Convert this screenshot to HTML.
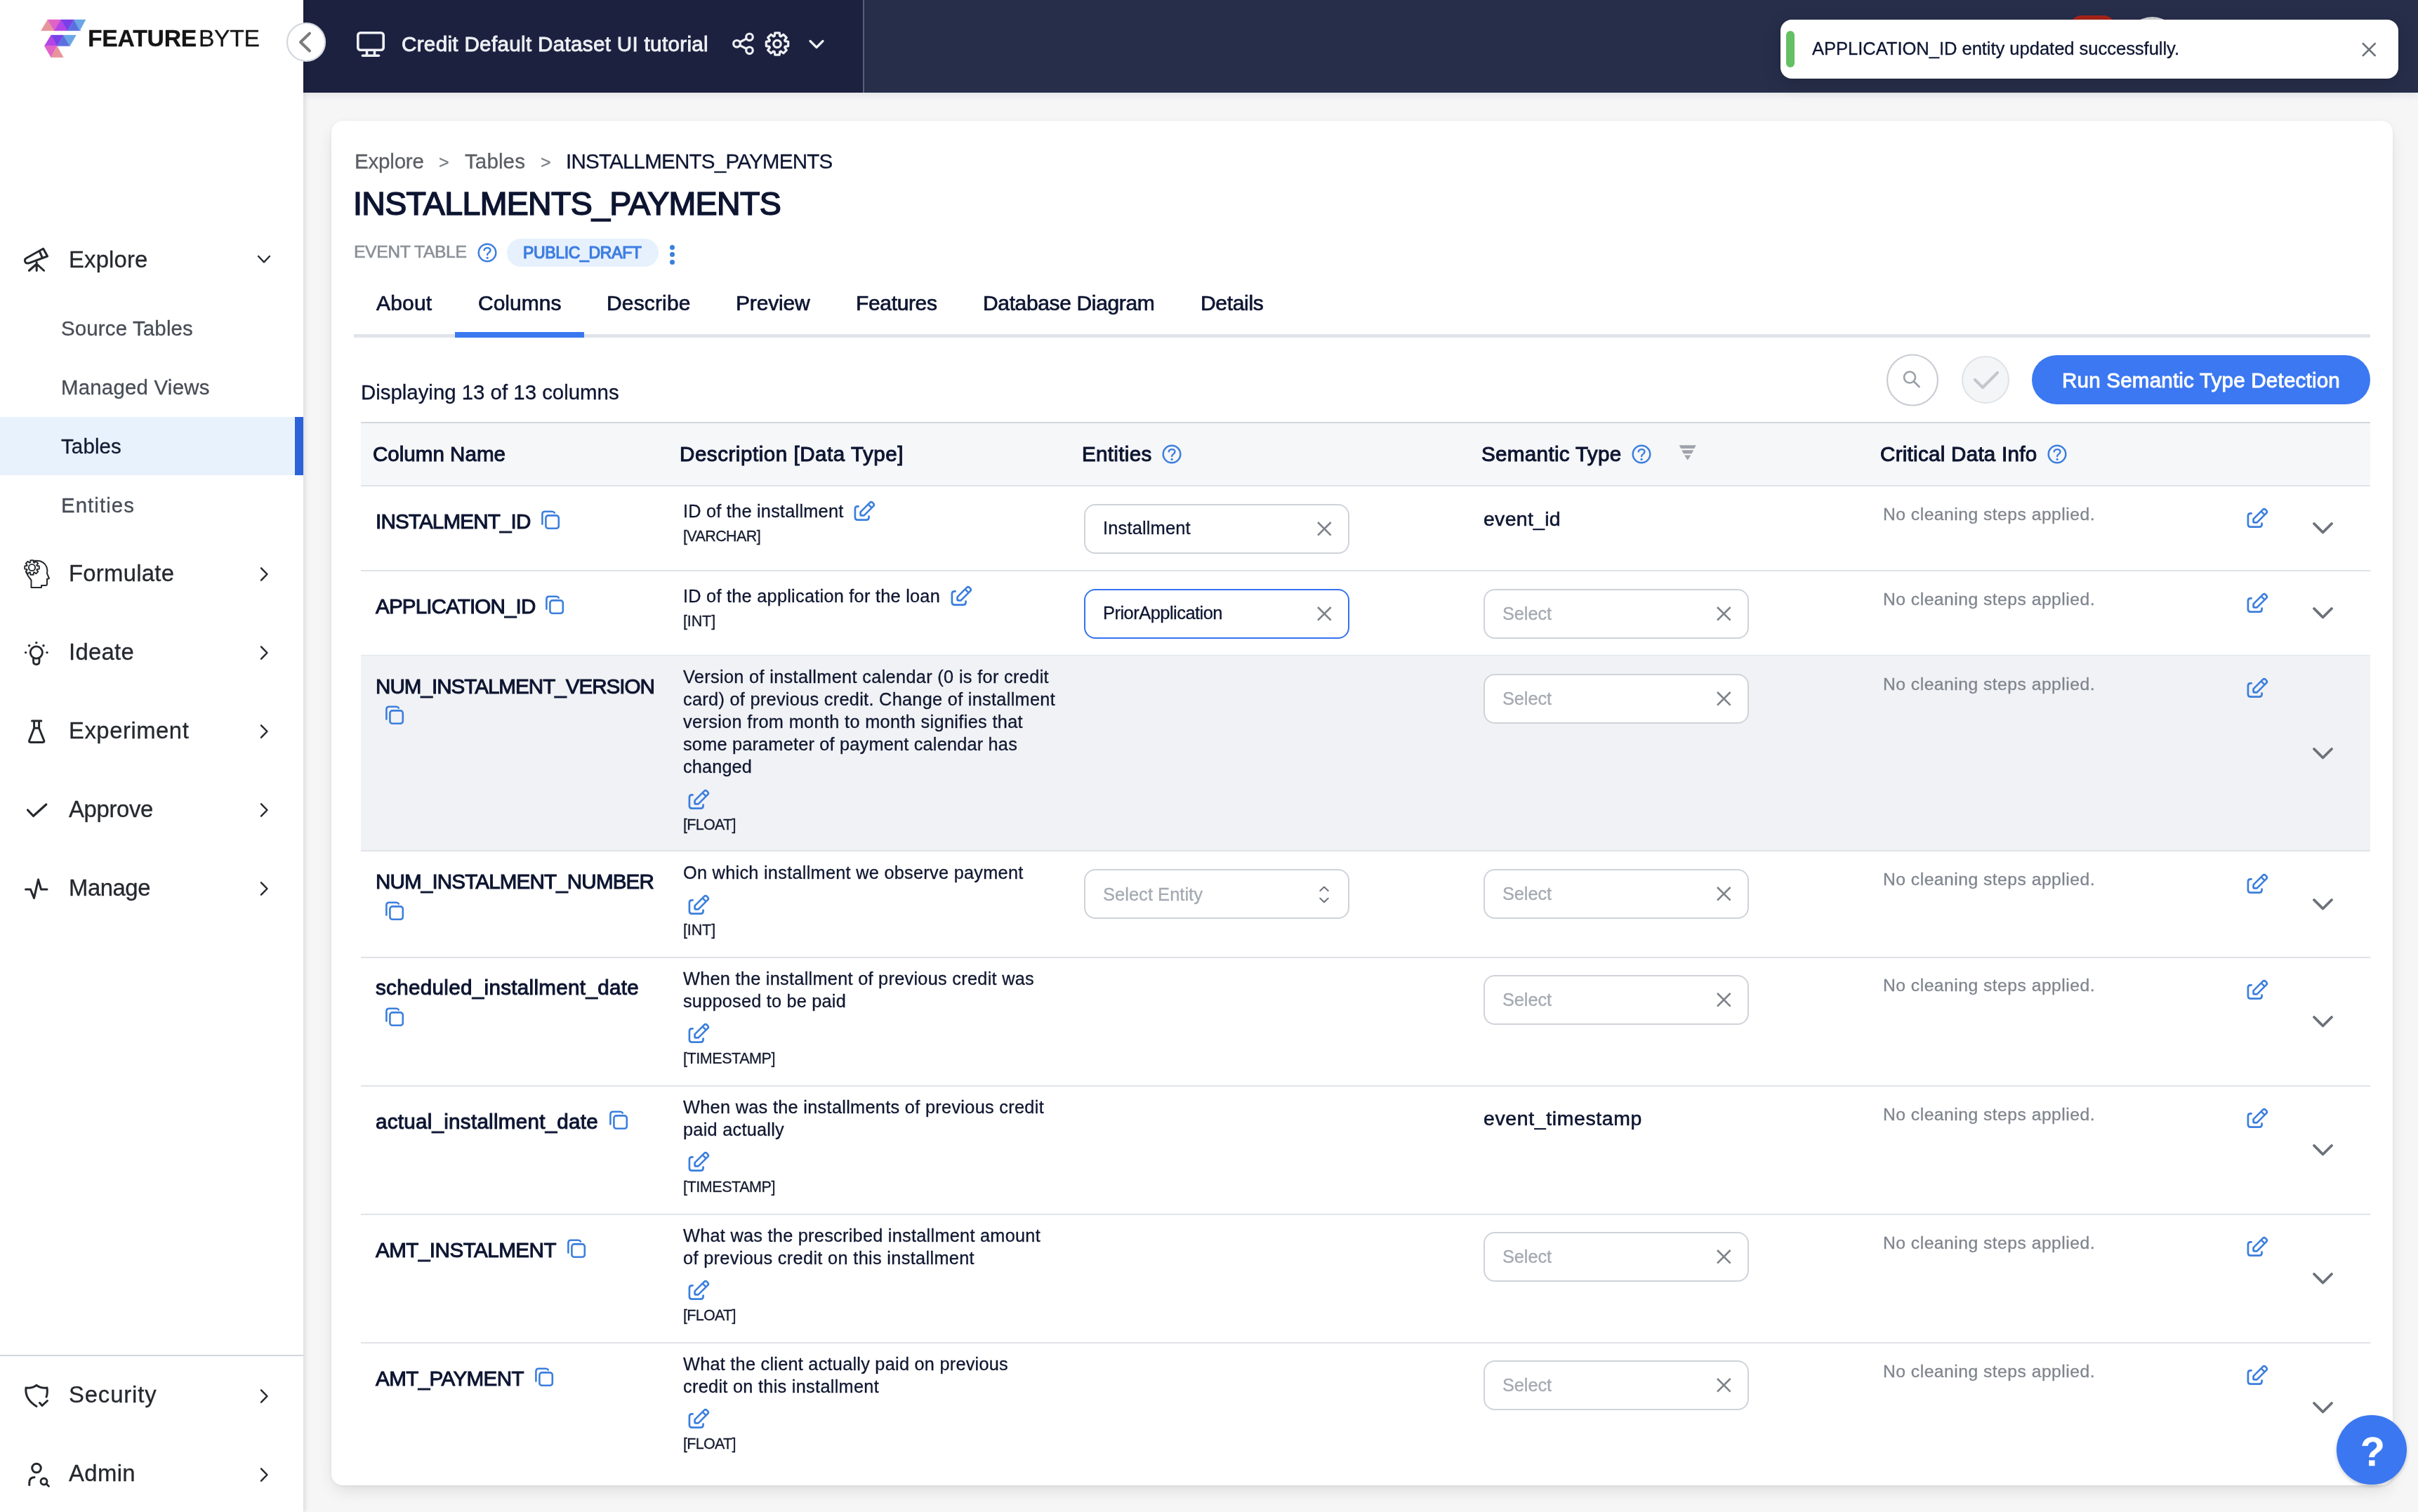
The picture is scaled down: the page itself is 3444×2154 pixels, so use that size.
<!DOCTYPE html><html><head><meta charset="utf-8"><style>
html,body{margin:0;padding:0;}
body{width:3444px;height:2154px;overflow:hidden;position:relative;background:#f6f6f7;font-family:"Liberation Sans", sans-serif;}
.t{position:absolute;white-space:nowrap;will-change:transform;-webkit-text-stroke:0.3px currentColor;}
.b{position:absolute;box-sizing:border-box;}
svg.b{overflow:visible;}

</style></head><body>
<div class="b" style="left:472px;top:172px;width:2936px;height:1944px;background:#fff;border-radius:16px;box-shadow:0 1px 5px rgba(0,0,0,0.06),0 10px 24px -4px rgba(0,0,0,0.11);"></div>
<div class="t" style="left:504.5px;top:214.9px;font-size:29.6px;line-height:29.6px;font-weight:400;color:#5b5e63;letter-spacing:-0.235px;">Explore</div>
<div class="t" style="left:625.0px;top:218.8px;font-size:25px;line-height:25px;font-weight:400;color:#7a7e84;">&gt;</div>
<div class="t" style="left:661.7px;top:214.9px;font-size:29.6px;line-height:29.6px;font-weight:400;color:#5b5e63;letter-spacing:0.076px;">Tables</div>
<div class="t" style="left:769.5px;top:218.8px;font-size:25px;line-height:25px;font-weight:400;color:#7a7e84;">&gt;</div>
<div class="t" style="left:805.6px;top:214.9px;font-size:29.6px;line-height:29.6px;font-weight:400;color:#0d1531;letter-spacing:-0.805px;">INSTALLMENTS_PAYMENTS</div>
<div class="t" style="left:503.0px;top:267.1px;font-size:46.5px;line-height:46.5px;font-weight:400;color:#0d1531;-webkit-text-stroke:1.6px #0d1531;letter-spacing:-0.653px;">INSTALLMENTS_PAYMENTS</div>
<div class="t" style="left:504.0px;top:346.8px;font-size:24.7px;line-height:24.7px;font-weight:400;color:#8a8f97;-webkit-text-stroke:0.6px #8a8f97;letter-spacing:-0.378px;">EVENT TABLE</div>
<svg class="b" style="left:678px;top:344px;" width="32" height="32" viewBox="678 344 32 32" fill="none" ><circle cx="694" cy="360" r="12.3" stroke="#3c7fdd" stroke-width="2.5"/><path d="M689.7,356.4 C689.7,352 698.5,352 698.5,356.6 C698.5,359.8 694.1,360 694.1,363" stroke="#3c7fdd" stroke-width="2.375" stroke-linecap="round"/><circle cx="694.1" cy="367.3" r="1.6" fill="#3c7fdd"/></svg>
<div class="b" style="left:722px;top:340px;width:216px;height:40px;background:#e6f1fd;border-radius:20px;"></div>
<div class="t" style="left:745.4px;top:348.8px;font-size:23px;line-height:23px;font-weight:400;color:#3d7de2;-webkit-text-stroke:1.2px #3d7de2;letter-spacing:-0.329px;">PUBLIC_DRAFT</div>
<div class="b" style="left:953.5px;top:348.5px;width:7px;height:7px;background:#3c7fdd;border-radius:50%;"></div>
<div class="b" style="left:953.5px;top:359.0px;width:7px;height:7px;background:#3c7fdd;border-radius:50%;"></div>
<div class="b" style="left:953.5px;top:369.5px;width:7px;height:7px;background:#3c7fdd;border-radius:50%;"></div>
<div class="t" style="left:536.4px;top:417.1px;font-size:30px;line-height:30px;font-weight:400;color:#0d1531;-webkit-text-stroke:0.7px #0d1531;letter-spacing:0.179px;">About</div>
<div class="t" style="left:681.0px;top:417.1px;font-size:30px;line-height:30px;font-weight:400;color:#0d1531;-webkit-text-stroke:0.7px #0d1531;letter-spacing:0.004px;">Columns</div>
<div class="t" style="left:864.0px;top:417.1px;font-size:30px;line-height:30px;font-weight:400;color:#0d1531;-webkit-text-stroke:0.7px #0d1531;letter-spacing:0.153px;">Describe</div>
<div class="t" style="left:1048.4px;top:417.1px;font-size:30px;line-height:30px;font-weight:400;color:#0d1531;-webkit-text-stroke:0.7px #0d1531;letter-spacing:-0.158px;">Preview</div>
<div class="t" style="left:1218.7px;top:417.1px;font-size:30px;line-height:30px;font-weight:400;color:#0d1531;-webkit-text-stroke:0.7px #0d1531;letter-spacing:-0.349px;">Features</div>
<div class="t" style="left:1399.6px;top:417.1px;font-size:30px;line-height:30px;font-weight:400;color:#0d1531;-webkit-text-stroke:0.7px #0d1531;letter-spacing:-0.358px;">Database Diagram</div>
<div class="t" style="left:1709.5px;top:417.1px;font-size:30px;line-height:30px;font-weight:400;color:#0d1531;-webkit-text-stroke:0.7px #0d1531;letter-spacing:-0.315px;">Details</div>
<div class="b" style="left:504px;top:476px;width:2872px;height:5px;background:#e1e4e9;"></div>
<div class="b" style="left:647.5px;top:473px;width:184.3px;height:8px;background:#3b78f0;"></div>
<div class="t" style="left:514.4px;top:543.7px;font-size:29.4px;line-height:29.4px;font-weight:400;color:#0d1531;letter-spacing:0.000px;">Displaying 13 of 13 columns</div>
<svg class="b" style="left:2686px;top:504px;" width="76" height="76" viewBox="2686 504 76 76" fill="none" ><circle cx="2724" cy="541.5" r="36" fill="#fff" stroke="#c9cdd3" stroke-width="2.2"/><circle cx="2720" cy="537.5" r="8" stroke="#9aa0a8" stroke-width="2.6"/><path d="M2726 543.5 L2733.5 551" stroke="#9aa0a8" stroke-width="2.8" stroke-linecap="round"/></svg>
<svg class="b" style="left:2794px;top:507px;" width="68" height="68" viewBox="2794 507 68 68" fill="none" ><circle cx="2828" cy="541" r="33" fill="#f4f5f7" stroke="#dfe2e6" stroke-width="2"/><path d="M2813 541 L2824 552 L2845 531" stroke="#c3c7cd" stroke-width="4.2" stroke-linecap="round" stroke-linejoin="round"/></svg>
<div class="b" style="left:2894px;top:506px;width:482px;height:70px;background:#3b78f2;border-radius:35px;"></div>
<div class="t" style="left:2936.6px;top:526.6px;font-size:29.6px;line-height:29.6px;font-weight:400;color:#fff;-webkit-text-stroke:0.9px #fff;letter-spacing:0.186px;">Run Semantic Type Detection</div>
<div class="b" style="left:514px;top:601px;width:2862px;height:92px;background:#f6f7f9;border-top:2px solid #d3d7dd;border-bottom:2px solid #e0e3e8;"></div>
<div class="t" style="left:531.0px;top:632.2px;font-size:29.6px;line-height:29.6px;font-weight:400;color:#0d1531;-webkit-text-stroke:1.0px #0d1531;letter-spacing:-0.013px;">Column Name</div>
<div class="t" style="left:968.4px;top:632.2px;font-size:29.6px;line-height:29.6px;font-weight:400;color:#0d1531;-webkit-text-stroke:1.0px #0d1531;letter-spacing:0.519px;">Description [Data Type]</div>
<div class="t" style="left:1541.0px;top:632.2px;font-size:29.6px;line-height:29.6px;font-weight:400;color:#0d1531;-webkit-text-stroke:1.0px #0d1531;letter-spacing:0.307px;">Entities</div>
<svg class="b" style="left:1652.6px;top:631.4px;" width="32" height="32" viewBox="1652.6 631.4 32 32" fill="none" ><circle cx="1668.6" cy="647.4" r="12.3" stroke="#3c7fdd" stroke-width="2.5"/><path d="M1664.3,643.8 C1664.3,639.4 1673.1,639.4 1673.1,644.0 C1673.1,647.1999999999999 1668.6999999999998,647.4 1668.6999999999998,650.4" stroke="#3c7fdd" stroke-width="2.375" stroke-linecap="round"/><circle cx="1668.6999999999998" cy="654.6999999999999" r="1.6" fill="#3c7fdd"/></svg>
<div class="t" style="left:2109.5px;top:632.2px;font-size:29.6px;line-height:29.6px;font-weight:400;color:#0d1531;-webkit-text-stroke:1.0px #0d1531;letter-spacing:0.329px;">Semantic Type</div>
<svg class="b" style="left:2321.6px;top:631.4px;" width="32" height="32" viewBox="2321.6 631.4 32 32" fill="none" ><circle cx="2337.6" cy="647.4" r="12.3" stroke="#3c7fdd" stroke-width="2.5"/><path d="M2333.2999999999997,643.8 C2333.2999999999997,639.4 2342.1,639.4 2342.1,644.0 C2342.1,647.1999999999999 2337.7,647.4 2337.7,650.4" stroke="#3c7fdd" stroke-width="2.375" stroke-linecap="round"/><circle cx="2337.7" cy="654.6999999999999" r="1.6" fill="#3c7fdd"/></svg>
<svg class="b" style="left:2390px;top:632px;" width="28" height="26" viewBox="2390 632 28 26" fill="none" ><path d="M2391.6 634.3 H2415.8 L2413.2 639 H2394.2 Z" fill="#9ea3ab"/><path d="M2395.3 641.3 H2412.1 L2409.6 646.2 H2397.8 Z" fill="#9ea3ab"/><path d="M2399 648.5 H2408.4 L2403.7 655.5 Z" fill="#9ea3ab"/></svg>
<div class="t" style="left:2678.0px;top:632.2px;font-size:29.6px;line-height:29.6px;font-weight:400;color:#0d1531;-webkit-text-stroke:1.0px #0d1531;letter-spacing:0.264px;">Critical Data Info</div>
<svg class="b" style="left:2914px;top:630.6px;" width="32" height="32" viewBox="2914 630.6 32 32" fill="none" ><circle cx="2930" cy="646.6" r="12.3" stroke="#3c7fdd" stroke-width="2.5"/><path d="M2925.7,643.0 C2925.7,638.6 2934.5,638.6 2934.5,643.2 C2934.5,646.4 2930.1,646.6 2930.1,649.6" stroke="#3c7fdd" stroke-width="2.375" stroke-linecap="round"/><circle cx="2930.1" cy="653.9" r="1.6" fill="#3c7fdd"/></svg>
<div class="b" style="left:514px;top:812px;width:2862px;height:2px;background:#e0e3e8;"></div>
<div class="t" style="left:534.8px;top:727.9px;font-size:29.6px;line-height:29.6px;font-weight:400;color:#0d1531;-webkit-text-stroke:1.0px #0d1531;letter-spacing:-0.832px;">INSTALMENT_ID</div>
<svg class="b" style="left:765.8px;top:722.8px;" width="36" height="36" viewBox="0 0 36 36" fill="none" ><rect x="11.4" y="11.4" width="18.4" height="18.4" rx="3.6" stroke="#3c7fdd" stroke-width="2.6"/><path d="M6.4,23.6 V9.6 Q6.4,5.8 10.2,5.8 H20.6 Q22.9,5.8 23.8,7.6" stroke="#3c7fdd" stroke-width="2.6" stroke-linecap="round"/></svg>
<div class="t" style="left:972.5px;top:716.1px;font-size:25.3px;line-height:25.3px;font-weight:400;color:#0f1730;letter-spacing:0.235px;">ID of the installment</div>
<svg class="b" style="left:1211.1px;top:707.5px;" width="40" height="40" viewBox="0 0 40 40" fill="none" ><path d="M11.6,13.4 H10.6 Q6.9,13.4 6.9,17.1 V28.9 Q6.9,32.6 10.6,32.6 H22.9 Q26.6,32.6 26.6,28.9 V27.6" stroke="#3c7fdd" stroke-width="2.7" stroke-linecap="round"/><path d="M14.6,25.7 V21.4 L27.9,8.1 Q29.9,6.1 31.9,8.1 L32.9,9.1 Q34.9,11.1 32.9,13.1 L19.6,26.4 H15.3 Z" stroke="#3c7fdd" stroke-width="2.7" stroke-linejoin="round"/><path d="M25.6,10.4 L30.6,15.4" stroke="#3c7fdd" stroke-width="2.6"/></svg>
<div class="t" style="left:972.5px;top:754.0px;font-size:21.5px;line-height:21.5px;font-weight:400;color:#141b2f;letter-spacing:-0.609px;">[VARCHAR]</div>
<div class="b" style="left:1544px;top:717.5px;width:378px;height:71px;background:#fff;border:2.2px solid #cfd3d9;border-radius:16px;"></div>
<div class="t" style="left:1571.0px;top:740.4px;font-size:25.5px;line-height:25.5px;font-weight:400;color:#0d1531;letter-spacing:0.135px;">Installment</div>
<svg class="b" style="left:1875.2px;top:741.5px;" width="22.6" height="22.6" viewBox="1875.2 741.5 22.6 22.6" fill="none" ><path d="M1877.2 743.5 L1895.8 762.1 M1895.8 743.5 L1877.2 762.1" stroke="#7d8289" stroke-width="2.6"/></svg>
<div class="t" style="left:2113.4px;top:724.5px;font-size:28.4px;line-height:28.4px;font-weight:400;color:#0d1531;-webkit-text-stroke:0.6px #0d1531;letter-spacing:0.332px;">event_id</div>
<div class="t" style="left:2681.8px;top:720.9px;font-size:24.7px;line-height:24.7px;font-weight:400;color:#7f858e;letter-spacing:0.477px;">No cleaning steps applied.</div>
<svg class="b" style="left:3195.0px;top:718px;" width="40" height="40" viewBox="0 0 40 40" fill="none" ><path d="M11.6,13.4 H10.6 Q6.9,13.4 6.9,17.1 V28.9 Q6.9,32.6 10.6,32.6 H22.9 Q26.6,32.6 26.6,28.9 V27.6" stroke="#3c7fdd" stroke-width="2.7" stroke-linecap="round"/><path d="M14.6,25.7 V21.4 L27.9,8.1 Q29.9,6.1 31.9,8.1 L32.9,9.1 Q34.9,11.1 32.9,13.1 L19.6,26.4 H15.3 Z" stroke="#3c7fdd" stroke-width="2.7" stroke-linejoin="round"/><path d="M25.6,10.4 L30.6,15.4" stroke="#3c7fdd" stroke-width="2.6"/></svg>
<svg class="b" style="left:3291.5px;top:742.25px;" width="33" height="20.5" viewBox="3291.5 742.25 33 20.5" fill="none" ><path d="M3295.5 746.25 L3308 758.75 L3320.5 746.25" stroke="#6c717a" stroke-width="3.8" stroke-linecap="round" stroke-linejoin="round"/></svg>
<div class="b" style="left:514px;top:933px;width:2862px;height:2px;background:#e0e3e8;"></div>
<div class="t" style="left:534.8px;top:848.9px;font-size:29.6px;line-height:29.6px;font-weight:400;color:#0d1531;-webkit-text-stroke:1.0px #0d1531;letter-spacing:-0.862px;">APPLICATION_ID</div>
<svg class="b" style="left:771.8px;top:843.8px;" width="36" height="36" viewBox="0 0 36 36" fill="none" ><rect x="11.4" y="11.4" width="18.4" height="18.4" rx="3.6" stroke="#3c7fdd" stroke-width="2.6"/><path d="M6.4,23.6 V9.6 Q6.4,5.8 10.2,5.8 H20.6 Q22.9,5.8 23.8,7.6" stroke="#3c7fdd" stroke-width="2.6" stroke-linecap="round"/></svg>
<div class="t" style="left:972.5px;top:837.1px;font-size:25.3px;line-height:25.3px;font-weight:400;color:#0f1730;letter-spacing:0.259px;">ID of the application for the loan</div>
<svg class="b" style="left:1348.6px;top:828.5px;" width="40" height="40" viewBox="0 0 40 40" fill="none" ><path d="M11.6,13.4 H10.6 Q6.9,13.4 6.9,17.1 V28.9 Q6.9,32.6 10.6,32.6 H22.9 Q26.6,32.6 26.6,28.9 V27.6" stroke="#3c7fdd" stroke-width="2.7" stroke-linecap="round"/><path d="M14.6,25.7 V21.4 L27.9,8.1 Q29.9,6.1 31.9,8.1 L32.9,9.1 Q34.9,11.1 32.9,13.1 L19.6,26.4 H15.3 Z" stroke="#3c7fdd" stroke-width="2.7" stroke-linejoin="round"/><path d="M25.6,10.4 L30.6,15.4" stroke="#3c7fdd" stroke-width="2.6"/></svg>
<div class="t" style="left:972.5px;top:875.0px;font-size:21.5px;line-height:21.5px;font-weight:400;color:#141b2f;letter-spacing:-0.119px;">[INT]</div>
<div class="b" style="left:1544px;top:838.5px;width:378px;height:71px;background:#fff;border:2.6px solid #3572f0;border-radius:16px;"></div>
<div class="t" style="left:1571.0px;top:861.4px;font-size:25.5px;line-height:25.5px;font-weight:400;color:#0d1531;letter-spacing:-0.537px;">PriorApplication</div>
<svg class="b" style="left:1875.2px;top:862.5px;" width="22.6" height="22.6" viewBox="1875.2 862.5 22.6 22.6" fill="none" ><path d="M1877.2 864.5 L1895.8 883.1 M1895.8 864.5 L1877.2 883.1" stroke="#7d8289" stroke-width="2.6"/></svg>
<div class="b" style="left:2113.4px;top:838.5px;width:378px;height:71px;background:#fff;border:2.2px solid #cfd3d9;border-radius:16px;"></div>
<div class="t" style="left:2139.9px;top:861.6px;font-size:25.3px;line-height:25.3px;font-weight:400;color:#a4aab2;letter-spacing:-0.052px;">Select</div>
<svg class="b" style="left:2443.8px;top:862.5px;" width="22.6" height="22.6" viewBox="2443.8 862.5 22.6 22.6" fill="none" ><path d="M2445.8 864.5 L2464.4 883.1 M2464.4 864.5 L2445.8 883.1" stroke="#7d8289" stroke-width="2.6"/></svg>
<div class="t" style="left:2681.8px;top:841.9px;font-size:24.7px;line-height:24.7px;font-weight:400;color:#7f858e;letter-spacing:0.477px;">No cleaning steps applied.</div>
<svg class="b" style="left:3195.0px;top:839px;" width="40" height="40" viewBox="0 0 40 40" fill="none" ><path d="M11.6,13.4 H10.6 Q6.9,13.4 6.9,17.1 V28.9 Q6.9,32.6 10.6,32.6 H22.9 Q26.6,32.6 26.6,28.9 V27.6" stroke="#3c7fdd" stroke-width="2.7" stroke-linecap="round"/><path d="M14.6,25.7 V21.4 L27.9,8.1 Q29.9,6.1 31.9,8.1 L32.9,9.1 Q34.9,11.1 32.9,13.1 L19.6,26.4 H15.3 Z" stroke="#3c7fdd" stroke-width="2.7" stroke-linejoin="round"/><path d="M25.6,10.4 L30.6,15.4" stroke="#3c7fdd" stroke-width="2.6"/></svg>
<svg class="b" style="left:3291.5px;top:863.25px;" width="33" height="20.5" viewBox="3291.5 863.25 33 20.5" fill="none" ><path d="M3295.5 867.25 L3308 879.75 L3320.5 867.25" stroke="#6c717a" stroke-width="3.8" stroke-linecap="round" stroke-linejoin="round"/></svg>
<div class="b" style="left:514px;top:934px;width:2862px;height:278.5px;background:#f1f2f5;"></div>
<div class="b" style="left:514px;top:1211px;width:2862px;height:2px;background:#e0e3e8;"></div>
<div class="t" style="left:534.8px;top:962.9px;font-size:29.6px;line-height:29.6px;font-weight:400;color:#0d1531;-webkit-text-stroke:1.0px #0d1531;letter-spacing:-0.989px;">NUM_INSTALMENT_VERSION</div>
<svg class="b" style="left:543.6px;top:1001.3px;" width="36" height="36" viewBox="0 0 36 36" fill="none" ><rect x="11.4" y="11.4" width="18.4" height="18.4" rx="3.6" stroke="#3c7fdd" stroke-width="2.6"/><path d="M6.4,23.6 V9.6 Q6.4,5.8 10.2,5.8 H20.6 Q22.9,5.8 23.8,7.6" stroke="#3c7fdd" stroke-width="2.6" stroke-linecap="round"/></svg>
<div class="t" style="left:972.5px;top:952.3px;font-size:25.3px;line-height:25.3px;font-weight:400;color:#0f1730;letter-spacing:0.338px;">Version of installment calendar (0 is for credit</div>
<div class="t" style="left:972.5px;top:984.3px;font-size:25.3px;line-height:25.3px;font-weight:400;color:#0f1730;letter-spacing:0.297px;">card) of previous credit. Change of installment</div>
<div class="t" style="left:972.5px;top:1016.3px;font-size:25.3px;line-height:25.3px;font-weight:400;color:#0f1730;letter-spacing:0.342px;">version from month to month signifies that</div>
<div class="t" style="left:972.5px;top:1048.3px;font-size:25.3px;line-height:25.3px;font-weight:400;color:#0f1730;letter-spacing:0.204px;">some parameter of payment calendar has</div>
<div class="t" style="left:972.5px;top:1080.3px;font-size:25.3px;line-height:25.3px;font-weight:400;color:#0f1730;letter-spacing:0.134px;">changed</div>
<svg class="b" style="left:975.0px;top:1118.5px;" width="40" height="40" viewBox="0 0 40 40" fill="none" ><path d="M11.6,13.4 H10.6 Q6.9,13.4 6.9,17.1 V28.9 Q6.9,32.6 10.6,32.6 H22.9 Q26.6,32.6 26.6,28.9 V27.6" stroke="#3c7fdd" stroke-width="2.7" stroke-linecap="round"/><path d="M14.6,25.7 V21.4 L27.9,8.1 Q29.9,6.1 31.9,8.1 L32.9,9.1 Q34.9,11.1 32.9,13.1 L19.6,26.4 H15.3 Z" stroke="#3c7fdd" stroke-width="2.7" stroke-linejoin="round"/><path d="M25.6,10.4 L30.6,15.4" stroke="#3c7fdd" stroke-width="2.6"/></svg>
<div class="t" style="left:972.5px;top:1164.5px;font-size:21.5px;line-height:21.5px;font-weight:400;color:#141b2f;letter-spacing:-0.692px;">[FLOAT]</div>
<div class="b" style="left:2113.4px;top:959.5px;width:378px;height:71px;background:#fff;border:2.2px solid #cfd3d9;border-radius:16px;"></div>
<div class="t" style="left:2139.9px;top:982.6px;font-size:25.3px;line-height:25.3px;font-weight:400;color:#a4aab2;letter-spacing:-0.052px;">Select</div>
<svg class="b" style="left:2443.8px;top:983.5px;" width="22.6" height="22.6" viewBox="2443.8 983.5 22.6 22.6" fill="none" ><path d="M2445.8 985.5 L2464.4 1004.1 M2464.4 985.5 L2445.8 1004.1" stroke="#7d8289" stroke-width="2.6"/></svg>
<div class="t" style="left:2681.8px;top:962.9px;font-size:24.7px;line-height:24.7px;font-weight:400;color:#7f858e;letter-spacing:0.477px;">No cleaning steps applied.</div>
<svg class="b" style="left:3195.0px;top:960px;" width="40" height="40" viewBox="0 0 40 40" fill="none" ><path d="M11.6,13.4 H10.6 Q6.9,13.4 6.9,17.1 V28.9 Q6.9,32.6 10.6,32.6 H22.9 Q26.6,32.6 26.6,28.9 V27.6" stroke="#3c7fdd" stroke-width="2.7" stroke-linecap="round"/><path d="M14.6,25.7 V21.4 L27.9,8.1 Q29.9,6.1 31.9,8.1 L32.9,9.1 Q34.9,11.1 32.9,13.1 L19.6,26.4 H15.3 Z" stroke="#3c7fdd" stroke-width="2.7" stroke-linejoin="round"/><path d="M25.6,10.4 L30.6,15.4" stroke="#3c7fdd" stroke-width="2.6"/></svg>
<svg class="b" style="left:3291.5px;top:1063.0px;" width="33" height="20.5" viewBox="3291.5 1063.0 33 20.5" fill="none" ><path d="M3295.5 1067.0 L3308 1079.5 L3320.5 1067.0" stroke="#6c717a" stroke-width="3.8" stroke-linecap="round" stroke-linejoin="round"/></svg>
<div class="b" style="left:514px;top:1363px;width:2862px;height:2px;background:#e0e3e8;"></div>
<div class="t" style="left:534.8px;top:1241.4px;font-size:29.6px;line-height:29.6px;font-weight:400;color:#0d1531;-webkit-text-stroke:1.0px #0d1531;letter-spacing:-0.848px;">NUM_INSTALMENT_NUMBER</div>
<svg class="b" style="left:543.6px;top:1279.8px;" width="36" height="36" viewBox="0 0 36 36" fill="none" ><rect x="11.4" y="11.4" width="18.4" height="18.4" rx="3.6" stroke="#3c7fdd" stroke-width="2.6"/><path d="M6.4,23.6 V9.6 Q6.4,5.8 10.2,5.8 H20.6 Q22.9,5.8 23.8,7.6" stroke="#3c7fdd" stroke-width="2.6" stroke-linecap="round"/></svg>
<div class="t" style="left:972.5px;top:1230.8px;font-size:25.3px;line-height:25.3px;font-weight:400;color:#0f1730;letter-spacing:0.276px;">On which installment we observe payment</div>
<svg class="b" style="left:975.0px;top:1269.0px;" width="40" height="40" viewBox="0 0 40 40" fill="none" ><path d="M11.6,13.4 H10.6 Q6.9,13.4 6.9,17.1 V28.9 Q6.9,32.6 10.6,32.6 H22.9 Q26.6,32.6 26.6,28.9 V27.6" stroke="#3c7fdd" stroke-width="2.7" stroke-linecap="round"/><path d="M14.6,25.7 V21.4 L27.9,8.1 Q29.9,6.1 31.9,8.1 L32.9,9.1 Q34.9,11.1 32.9,13.1 L19.6,26.4 H15.3 Z" stroke="#3c7fdd" stroke-width="2.7" stroke-linejoin="round"/><path d="M25.6,10.4 L30.6,15.4" stroke="#3c7fdd" stroke-width="2.6"/></svg>
<div class="t" style="left:972.5px;top:1315.0px;font-size:21.5px;line-height:21.5px;font-weight:400;color:#141b2f;letter-spacing:-0.119px;">[INT]</div>
<div class="b" style="left:1544px;top:1238.0px;width:378px;height:71px;background:#fff;border:2.2px solid #cfd3d9;border-radius:16px;"></div>
<div class="t" style="left:1571.0px;top:1262.1px;font-size:25.5px;line-height:25.5px;font-weight:400;color:#a4aab2;letter-spacing:0.020px;">Select Entity</div>
<svg class="b" style="left:1874px;top:1257.5px;" width="24" height="34" viewBox="1874 1257.5 24 34" fill="none" ><path d="M1880.3 1268.5 L1886 1263.1 L1891.7 1268.5 M1880.3 1279.3 L1886 1284.7 L1891.7 1279.3" stroke="#6e737b" stroke-width="2.0" stroke-linecap="round" stroke-linejoin="round"/></svg>
<div class="b" style="left:2113.4px;top:1238.0px;width:378px;height:71px;background:#fff;border:2.2px solid #cfd3d9;border-radius:16px;"></div>
<div class="t" style="left:2139.9px;top:1261.1px;font-size:25.3px;line-height:25.3px;font-weight:400;color:#a4aab2;letter-spacing:-0.052px;">Select</div>
<svg class="b" style="left:2443.8px;top:1262.0px;" width="22.6" height="22.6" viewBox="2443.8 1262.0 22.6 22.6" fill="none" ><path d="M2445.8 1264.0 L2464.4 1282.6 M2464.4 1264.0 L2445.8 1282.6" stroke="#7d8289" stroke-width="2.6"/></svg>
<div class="t" style="left:2681.8px;top:1241.4px;font-size:24.7px;line-height:24.7px;font-weight:400;color:#7f858e;letter-spacing:0.477px;">No cleaning steps applied.</div>
<svg class="b" style="left:3195.0px;top:1238.5px;" width="40" height="40" viewBox="0 0 40 40" fill="none" ><path d="M11.6,13.4 H10.6 Q6.9,13.4 6.9,17.1 V28.9 Q6.9,32.6 10.6,32.6 H22.9 Q26.6,32.6 26.6,28.9 V27.6" stroke="#3c7fdd" stroke-width="2.7" stroke-linecap="round"/><path d="M14.6,25.7 V21.4 L27.9,8.1 Q29.9,6.1 31.9,8.1 L32.9,9.1 Q34.9,11.1 32.9,13.1 L19.6,26.4 H15.3 Z" stroke="#3c7fdd" stroke-width="2.7" stroke-linejoin="round"/><path d="M25.6,10.4 L30.6,15.4" stroke="#3c7fdd" stroke-width="2.6"/></svg>
<svg class="b" style="left:3291.5px;top:1277.75px;" width="33" height="20.5" viewBox="3291.5 1277.75 33 20.5" fill="none" ><path d="M3295.5 1281.75 L3308 1294.25 L3320.5 1281.75" stroke="#6c717a" stroke-width="3.8" stroke-linecap="round" stroke-linejoin="round"/></svg>
<div class="b" style="left:514px;top:1546px;width:2862px;height:2px;background:#e0e3e8;"></div>
<div class="t" style="left:534.8px;top:1392.4px;font-size:29.6px;line-height:29.6px;font-weight:400;color:#0d1531;-webkit-text-stroke:1.0px #0d1531;letter-spacing:0.312px;">scheduled_installment_date</div>
<svg class="b" style="left:543.6px;top:1430.8px;" width="36" height="36" viewBox="0 0 36 36" fill="none" ><rect x="11.4" y="11.4" width="18.4" height="18.4" rx="3.6" stroke="#3c7fdd" stroke-width="2.6"/><path d="M6.4,23.6 V9.6 Q6.4,5.8 10.2,5.8 H20.6 Q22.9,5.8 23.8,7.6" stroke="#3c7fdd" stroke-width="2.6" stroke-linecap="round"/></svg>
<div class="t" style="left:972.5px;top:1381.8px;font-size:25.3px;line-height:25.3px;font-weight:400;color:#0f1730;letter-spacing:0.281px;">When the installment of previous credit was</div>
<div class="t" style="left:972.5px;top:1413.8px;font-size:25.3px;line-height:25.3px;font-weight:400;color:#0f1730;letter-spacing:0.218px;">supposed to be paid</div>
<svg class="b" style="left:975.0px;top:1452.0px;" width="40" height="40" viewBox="0 0 40 40" fill="none" ><path d="M11.6,13.4 H10.6 Q6.9,13.4 6.9,17.1 V28.9 Q6.9,32.6 10.6,32.6 H22.9 Q26.6,32.6 26.6,28.9 V27.6" stroke="#3c7fdd" stroke-width="2.7" stroke-linecap="round"/><path d="M14.6,25.7 V21.4 L27.9,8.1 Q29.9,6.1 31.9,8.1 L32.9,9.1 Q34.9,11.1 32.9,13.1 L19.6,26.4 H15.3 Z" stroke="#3c7fdd" stroke-width="2.7" stroke-linejoin="round"/><path d="M25.6,10.4 L30.6,15.4" stroke="#3c7fdd" stroke-width="2.6"/></svg>
<div class="t" style="left:972.5px;top:1498.0px;font-size:21.5px;line-height:21.5px;font-weight:400;color:#141b2f;letter-spacing:-0.435px;">[TIMESTAMP]</div>
<div class="b" style="left:2113.4px;top:1389.0px;width:378px;height:71px;background:#fff;border:2.2px solid #cfd3d9;border-radius:16px;"></div>
<div class="t" style="left:2139.9px;top:1412.1px;font-size:25.3px;line-height:25.3px;font-weight:400;color:#a4aab2;letter-spacing:-0.052px;">Select</div>
<svg class="b" style="left:2443.8px;top:1413.0px;" width="22.6" height="22.6" viewBox="2443.8 1413.0 22.6 22.6" fill="none" ><path d="M2445.8 1415.0 L2464.4 1433.6 M2464.4 1415.0 L2445.8 1433.6" stroke="#7d8289" stroke-width="2.6"/></svg>
<div class="t" style="left:2681.8px;top:1392.4px;font-size:24.7px;line-height:24.7px;font-weight:400;color:#7f858e;letter-spacing:0.477px;">No cleaning steps applied.</div>
<svg class="b" style="left:3195.0px;top:1389.5px;" width="40" height="40" viewBox="0 0 40 40" fill="none" ><path d="M11.6,13.4 H10.6 Q6.9,13.4 6.9,17.1 V28.9 Q6.9,32.6 10.6,32.6 H22.9 Q26.6,32.6 26.6,28.9 V27.6" stroke="#3c7fdd" stroke-width="2.7" stroke-linecap="round"/><path d="M14.6,25.7 V21.4 L27.9,8.1 Q29.9,6.1 31.9,8.1 L32.9,9.1 Q34.9,11.1 32.9,13.1 L19.6,26.4 H15.3 Z" stroke="#3c7fdd" stroke-width="2.7" stroke-linejoin="round"/><path d="M25.6,10.4 L30.6,15.4" stroke="#3c7fdd" stroke-width="2.6"/></svg>
<svg class="b" style="left:3291.5px;top:1444.85px;" width="33" height="20.5" viewBox="3291.5 1444.85 33 20.5" fill="none" ><path d="M3295.5 1448.85 L3308 1461.35 L3320.5 1448.85" stroke="#6c717a" stroke-width="3.8" stroke-linecap="round" stroke-linejoin="round"/></svg>
<div class="b" style="left:514px;top:1729px;width:2862px;height:2px;background:#e0e3e8;"></div>
<div class="t" style="left:534.8px;top:1582.6px;font-size:29.6px;line-height:29.6px;font-weight:400;color:#0d1531;-webkit-text-stroke:1.0px #0d1531;letter-spacing:0.264px;">actual_installment_date</div>
<svg class="b" style="left:863.0px;top:1577.5px;" width="36" height="36" viewBox="0 0 36 36" fill="none" ><rect x="11.4" y="11.4" width="18.4" height="18.4" rx="3.6" stroke="#3c7fdd" stroke-width="2.6"/><path d="M6.4,23.6 V9.6 Q6.4,5.8 10.2,5.8 H20.6 Q22.9,5.8 23.8,7.6" stroke="#3c7fdd" stroke-width="2.6" stroke-linecap="round"/></svg>
<div class="t" style="left:972.5px;top:1565.0px;font-size:25.3px;line-height:25.3px;font-weight:400;color:#0f1730;letter-spacing:0.306px;">When was the installments of previous credit</div>
<div class="t" style="left:972.5px;top:1597.0px;font-size:25.3px;line-height:25.3px;font-weight:400;color:#0f1730;letter-spacing:0.258px;">paid actually</div>
<svg class="b" style="left:975.0px;top:1635.2px;" width="40" height="40" viewBox="0 0 40 40" fill="none" ><path d="M11.6,13.4 H10.6 Q6.9,13.4 6.9,17.1 V28.9 Q6.9,32.6 10.6,32.6 H22.9 Q26.6,32.6 26.6,28.9 V27.6" stroke="#3c7fdd" stroke-width="2.7" stroke-linecap="round"/><path d="M14.6,25.7 V21.4 L27.9,8.1 Q29.9,6.1 31.9,8.1 L32.9,9.1 Q34.9,11.1 32.9,13.1 L19.6,26.4 H15.3 Z" stroke="#3c7fdd" stroke-width="2.7" stroke-linejoin="round"/><path d="M25.6,10.4 L30.6,15.4" stroke="#3c7fdd" stroke-width="2.6"/></svg>
<div class="t" style="left:972.5px;top:1681.2px;font-size:21.5px;line-height:21.5px;font-weight:400;color:#141b2f;letter-spacing:-0.435px;">[TIMESTAMP]</div>
<div class="t" style="left:2113.4px;top:1579.2px;font-size:28.4px;line-height:28.4px;font-weight:400;color:#0d1531;-webkit-text-stroke:0.6px #0d1531;letter-spacing:0.654px;">event_timestamp</div>
<div class="t" style="left:2681.8px;top:1575.6px;font-size:24.7px;line-height:24.7px;font-weight:400;color:#7f858e;letter-spacing:0.477px;">No cleaning steps applied.</div>
<svg class="b" style="left:3195.0px;top:1572.7px;" width="40" height="40" viewBox="0 0 40 40" fill="none" ><path d="M11.6,13.4 H10.6 Q6.9,13.4 6.9,17.1 V28.9 Q6.9,32.6 10.6,32.6 H22.9 Q26.6,32.6 26.6,28.9 V27.6" stroke="#3c7fdd" stroke-width="2.7" stroke-linecap="round"/><path d="M14.6,25.7 V21.4 L27.9,8.1 Q29.9,6.1 31.9,8.1 L32.9,9.1 Q34.9,11.1 32.9,13.1 L19.6,26.4 H15.3 Z" stroke="#3c7fdd" stroke-width="2.7" stroke-linejoin="round"/><path d="M25.6,10.4 L30.6,15.4" stroke="#3c7fdd" stroke-width="2.6"/></svg>
<svg class="b" style="left:3291.5px;top:1628.0px;" width="33" height="20.5" viewBox="3291.5 1628.0 33 20.5" fill="none" ><path d="M3295.5 1632.0 L3308 1644.5 L3320.5 1632.0" stroke="#6c717a" stroke-width="3.8" stroke-linecap="round" stroke-linejoin="round"/></svg>
<div class="b" style="left:514px;top:1912px;width:2862px;height:2px;background:#e0e3e8;"></div>
<div class="t" style="left:534.8px;top:1765.7px;font-size:29.6px;line-height:29.6px;font-weight:400;color:#0d1531;-webkit-text-stroke:1.0px #0d1531;letter-spacing:-0.513px;">AMT_INSTALMENT</div>
<svg class="b" style="left:802.6999999999999px;top:1760.6px;" width="36" height="36" viewBox="0 0 36 36" fill="none" ><rect x="11.4" y="11.4" width="18.4" height="18.4" rx="3.6" stroke="#3c7fdd" stroke-width="2.6"/><path d="M6.4,23.6 V9.6 Q6.4,5.8 10.2,5.8 H20.6 Q22.9,5.8 23.8,7.6" stroke="#3c7fdd" stroke-width="2.6" stroke-linecap="round"/></svg>
<div class="t" style="left:972.5px;top:1748.1px;font-size:25.3px;line-height:25.3px;font-weight:400;color:#0f1730;letter-spacing:0.268px;">What was the prescribed installment amount</div>
<div class="t" style="left:972.5px;top:1780.1px;font-size:25.3px;line-height:25.3px;font-weight:400;color:#0f1730;letter-spacing:0.338px;">of previous credit on this installment</div>
<svg class="b" style="left:975.0px;top:1818.3px;" width="40" height="40" viewBox="0 0 40 40" fill="none" ><path d="M11.6,13.4 H10.6 Q6.9,13.4 6.9,17.1 V28.9 Q6.9,32.6 10.6,32.6 H22.9 Q26.6,32.6 26.6,28.9 V27.6" stroke="#3c7fdd" stroke-width="2.7" stroke-linecap="round"/><path d="M14.6,25.7 V21.4 L27.9,8.1 Q29.9,6.1 31.9,8.1 L32.9,9.1 Q34.9,11.1 32.9,13.1 L19.6,26.4 H15.3 Z" stroke="#3c7fdd" stroke-width="2.7" stroke-linejoin="round"/><path d="M25.6,10.4 L30.6,15.4" stroke="#3c7fdd" stroke-width="2.6"/></svg>
<div class="t" style="left:972.5px;top:1864.3px;font-size:21.5px;line-height:21.5px;font-weight:400;color:#141b2f;letter-spacing:-0.692px;">[FLOAT]</div>
<div class="b" style="left:2113.4px;top:1755.3px;width:378px;height:71px;background:#fff;border:2.2px solid #cfd3d9;border-radius:16px;"></div>
<div class="t" style="left:2139.9px;top:1778.4px;font-size:25.3px;line-height:25.3px;font-weight:400;color:#a4aab2;letter-spacing:-0.052px;">Select</div>
<svg class="b" style="left:2443.8px;top:1779.3px;" width="22.6" height="22.6" viewBox="2443.8 1779.3 22.6 22.6" fill="none" ><path d="M2445.8 1781.3 L2464.4 1799.8999999999999 M2464.4 1781.3 L2445.8 1799.8999999999999" stroke="#7d8289" stroke-width="2.6"/></svg>
<div class="t" style="left:2681.8px;top:1758.7px;font-size:24.7px;line-height:24.7px;font-weight:400;color:#7f858e;letter-spacing:0.477px;">No cleaning steps applied.</div>
<svg class="b" style="left:3195.0px;top:1755.8px;" width="40" height="40" viewBox="0 0 40 40" fill="none" ><path d="M11.6,13.4 H10.6 Q6.9,13.4 6.9,17.1 V28.9 Q6.9,32.6 10.6,32.6 H22.9 Q26.6,32.6 26.6,28.9 V27.6" stroke="#3c7fdd" stroke-width="2.7" stroke-linecap="round"/><path d="M14.6,25.7 V21.4 L27.9,8.1 Q29.9,6.1 31.9,8.1 L32.9,9.1 Q34.9,11.1 32.9,13.1 L19.6,26.4 H15.3 Z" stroke="#3c7fdd" stroke-width="2.7" stroke-linejoin="round"/><path d="M25.6,10.4 L30.6,15.4" stroke="#3c7fdd" stroke-width="2.6"/></svg>
<svg class="b" style="left:3291.5px;top:1811.05px;" width="33" height="20.5" viewBox="3291.5 1811.05 33 20.5" fill="none" ><path d="M3295.5 1815.05 L3308 1827.55 L3320.5 1815.05" stroke="#6c717a" stroke-width="3.8" stroke-linecap="round" stroke-linejoin="round"/></svg>
<div class="t" style="left:534.8px;top:1948.7px;font-size:29.6px;line-height:29.6px;font-weight:400;color:#0d1531;-webkit-text-stroke:1.0px #0d1531;letter-spacing:-0.599px;">AMT_PAYMENT</div>
<svg class="b" style="left:756.5999999999999px;top:1943.6px;" width="36" height="36" viewBox="0 0 36 36" fill="none" ><rect x="11.4" y="11.4" width="18.4" height="18.4" rx="3.6" stroke="#3c7fdd" stroke-width="2.6"/><path d="M6.4,23.6 V9.6 Q6.4,5.8 10.2,5.8 H20.6 Q22.9,5.8 23.8,7.6" stroke="#3c7fdd" stroke-width="2.6" stroke-linecap="round"/></svg>
<div class="t" style="left:972.5px;top:1931.1px;font-size:25.3px;line-height:25.3px;font-weight:400;color:#0f1730;letter-spacing:0.249px;">What the client actually paid on previous</div>
<div class="t" style="left:972.5px;top:1963.1px;font-size:25.3px;line-height:25.3px;font-weight:400;color:#0f1730;letter-spacing:0.293px;">credit on this installment</div>
<svg class="b" style="left:975.0px;top:2001.3px;" width="40" height="40" viewBox="0 0 40 40" fill="none" ><path d="M11.6,13.4 H10.6 Q6.9,13.4 6.9,17.1 V28.9 Q6.9,32.6 10.6,32.6 H22.9 Q26.6,32.6 26.6,28.9 V27.6" stroke="#3c7fdd" stroke-width="2.7" stroke-linecap="round"/><path d="M14.6,25.7 V21.4 L27.9,8.1 Q29.9,6.1 31.9,8.1 L32.9,9.1 Q34.9,11.1 32.9,13.1 L19.6,26.4 H15.3 Z" stroke="#3c7fdd" stroke-width="2.7" stroke-linejoin="round"/><path d="M25.6,10.4 L30.6,15.4" stroke="#3c7fdd" stroke-width="2.6"/></svg>
<div class="t" style="left:972.5px;top:2047.3px;font-size:21.5px;line-height:21.5px;font-weight:400;color:#141b2f;letter-spacing:-0.692px;">[FLOAT]</div>
<div class="b" style="left:2113.4px;top:1938.3px;width:378px;height:71px;background:#fff;border:2.2px solid #cfd3d9;border-radius:16px;"></div>
<div class="t" style="left:2139.9px;top:1961.4px;font-size:25.3px;line-height:25.3px;font-weight:400;color:#a4aab2;letter-spacing:-0.052px;">Select</div>
<svg class="b" style="left:2443.8px;top:1962.3px;" width="22.6" height="22.6" viewBox="2443.8 1962.3 22.6 22.6" fill="none" ><path d="M2445.8 1964.3 L2464.4 1982.8999999999999 M2464.4 1964.3 L2445.8 1982.8999999999999" stroke="#7d8289" stroke-width="2.6"/></svg>
<div class="t" style="left:2681.8px;top:1941.7px;font-size:24.7px;line-height:24.7px;font-weight:400;color:#7f858e;letter-spacing:0.477px;">No cleaning steps applied.</div>
<svg class="b" style="left:3195.0px;top:1938.8px;" width="40" height="40" viewBox="0 0 40 40" fill="none" ><path d="M11.6,13.4 H10.6 Q6.9,13.4 6.9,17.1 V28.9 Q6.9,32.6 10.6,32.6 H22.9 Q26.6,32.6 26.6,28.9 V27.6" stroke="#3c7fdd" stroke-width="2.7" stroke-linecap="round"/><path d="M14.6,25.7 V21.4 L27.9,8.1 Q29.9,6.1 31.9,8.1 L32.9,9.1 Q34.9,11.1 32.9,13.1 L19.6,26.4 H15.3 Z" stroke="#3c7fdd" stroke-width="2.7" stroke-linejoin="round"/><path d="M25.6,10.4 L30.6,15.4" stroke="#3c7fdd" stroke-width="2.6"/></svg>
<svg class="b" style="left:3291.5px;top:1995.05px;" width="33" height="20.5" viewBox="3291.5 1995.05 33 20.5" fill="none" ><path d="M3295.5 1999.05 L3308 2011.55 L3320.5 1999.05" stroke="#6c717a" stroke-width="3.8" stroke-linecap="round" stroke-linejoin="round"/></svg>
<div class="b" style="left:432px;top:0px;width:3012px;height:132px;background:#272e4a;box-shadow:0 4px 10px rgba(40,50,90,0.09);"></div>
<div class="b" style="left:432px;top:0px;width:798px;height:132px;background:#1c2140;"></div>
<div class="b" style="left:1229px;top:0px;width:2px;height:132px;background:#596075;"></div>
<svg class="b" style="left:504px;top:42px;" width="48" height="44" viewBox="504 42 48 44" fill="none" ><rect x="509.8" y="46.8" width="36.4" height="24.4" rx="3.5" stroke="#eef0f4" stroke-width="3.6"/><path d="M522.5 71.5 V79 M533.5 71.5 V79" stroke="#eef0f4" stroke-width="3.6"/><path d="M516.5 79.3 H539.5" stroke="#eef0f4" stroke-width="3.6" stroke-linecap="round"/></svg>
<div class="t" style="left:572.0px;top:48.2px;font-size:29.6px;line-height:29.6px;font-weight:400;color:#eef0f4;-webkit-text-stroke:0.9px #eef0f4;letter-spacing:0.323px;">Credit Default Dataset UI tutorial</div>
<svg class="b" style="left:1040px;top:43px;" width="40" height="40" viewBox="1040 43 40 40" fill="none" ><circle cx="1067.5" cy="52.8" r="4.8" stroke="#eef0f4" stroke-width="3.2"/><circle cx="1049.5" cy="62.3" r="4.8" stroke="#eef0f4" stroke-width="3.2"/><circle cx="1067.5" cy="71.8" r="4.8" stroke="#eef0f4" stroke-width="3.2"/><path d="M1053.8 60 L1063.2 55.1 M1053.8 64.6 L1063.2 69.5" stroke="#eef0f4" stroke-width="3.2"/></svg>
<svg class="b" style="left:1086px;top:42px;" width="42" height="42" viewBox="1086 42 42 42" fill="none" ><path d="M1122.68 59.32 L1122.68 65.68 L1118.16 66.32 L1117.60 67.69 L1120.34 71.34 L1115.84 75.84 L1112.19 73.10 L1110.82 73.66 L1110.18 78.18 L1103.82 78.18 L1103.18 73.66 L1101.81 73.10 L1098.16 75.84 L1093.66 71.34 L1096.40 67.69 L1095.84 66.32 L1091.32 65.68 L1091.32 59.32 L1095.84 58.68 L1096.40 57.31 L1093.66 53.66 L1098.16 49.16 L1101.81 51.90 L1103.18 51.34 L1103.82 46.82 L1110.18 46.82 L1110.82 51.34 L1112.19 51.90 L1115.84 49.16 L1120.34 53.66 L1117.60 57.31 L1118.16 58.68 Z" stroke="#eef0f4" stroke-width="3.2" stroke-linejoin="round"/><circle cx="1107" cy="62.5" r="5.2" stroke="#eef0f4" stroke-width="3.2"/></svg>
<svg class="b" style="left:1148px;top:52px;" width="30" height="24" viewBox="1148 52 30 24" fill="none" ><path d="M1154 58.5 L1163 67.5 L1172 58.5" stroke="#eef0f4" stroke-width="3.2" stroke-linecap="round" stroke-linejoin="round"/></svg>
<div class="b" style="left:2947.5px;top:21.8px;width:65px;height:60px;background:#a82419;border-radius:17px;"></div>
<div class="b" style="left:3027px;top:23.8px;width:77px;height:77px;background:#cfd0d3;border-radius:50%;"></div>
<div class="b" style="left:2536px;top:28px;width:880px;height:84px;background:#fff;border-radius:16px;box-shadow:0 6px 24px rgba(0,0,0,0.16);"></div>
<div class="b" style="left:2544px;top:44px;width:12px;height:52px;background:#63c065;border-radius:6px;"></div>
<div class="t" style="left:2580.8px;top:57.3px;font-size:25.6px;line-height:25.6px;font-weight:400;color:#0d1531;letter-spacing:-0.055px;">APPLICATION_ID entity updated successfully.</div>
<svg class="b" style="left:3362px;top:58px;" width="24" height="24" viewBox="3362 58 24 24" fill="none" ><path d="M3365 61.3 L3383.5 79.8 M3383.5 61.3 L3365 79.8" stroke="#6b7078" stroke-width="2.6"/></svg>
<div class="b" style="left:0px;top:0px;width:432px;height:2154px;background:#fff;box-shadow:2px 0 7px rgba(0,0,0,0.13);"></div>
<svg class="b" style="left:54px;top:24px;" width="72" height="62" viewBox="54 24 72 62" fill="none" ><path d="M58.4 43.75 L67.9 28 L77.2 43.75 Z" fill="#e8949c" stroke="#e8949c" stroke-width="0.4"/><path d="M67.9 28 L86.7 28 L77.2 43.75 Z" fill="#e063c6" stroke="#e063c6" stroke-width="0.4"/><path d="M77.2 43.75 L86.7 28 L96 43.75 Z" fill="#b544e6" stroke="#b544e6" stroke-width="0.4"/><path d="M86.7 28 L105.5 28 L96 43.75 Z" fill="#7a3fe6" stroke="#7a3fe6" stroke-width="0.4"/><path d="M96 43.75 L105.5 28 L114.8 43.75 Z" fill="#5b6fe0" stroke="#5b6fe0" stroke-width="0.4"/><path d="M105.5 28 L122 28 L113.6 43.75 Z" fill="#6aa6e6" stroke="#6aa6e6" stroke-width="0.4"/><path d="M63.3 65.6 L72.7 50 L81.4 65.6 Z" fill="#b544e6" stroke="#b544e6" stroke-width="0.4"/><path d="M72.7 50 L90.5 50 L81.4 65.6 Z" fill="#7a3fe6" stroke="#7a3fe6" stroke-width="0.4"/><path d="M81.4 65.6 L90.5 50 L99.5 65.6 Z" fill="#5b6fe0" stroke="#5b6fe0" stroke-width="0.4"/><path d="M90.5 50 L108.4 50 L99.5 65.6 Z" fill="#6aa6e6" stroke="#6aa6e6" stroke-width="0.4"/><path d="M63.3 65.6 L81.2 65.6 L72.7 81.8 Z" fill="#e063c6" stroke="#e063c6" stroke-width="0.4"/><path d="M72.7 81.8 L81.2 65.6 L90.4 81.8 Z" fill="#e8949c" stroke="#e8949c" stroke-width="0.4"/></svg>
<div class="t" style="left:124.5px;top:38.1px;font-size:33.7px;line-height:33.7px;font-weight:700;color:#151515;letter-spacing:-0.225px;">FEATURE</div>
<div class="t" style="left:283.4px;top:38.1px;font-size:33.7px;line-height:33.7px;font-weight:400;color:#151515;letter-spacing:-0.350px;">BYTE</div>
<svg class="b" style="left:404px;top:28px;" width="64" height="64" viewBox="404 28 64 64" fill="none" ><circle cx="436" cy="60" r="27" fill="#fff" stroke="#d3d8de" stroke-width="2.2"/><path d="M441 47.5 L428 60 L441 72.5" stroke="#7b7b7b" stroke-width="4" stroke-linecap="round" stroke-linejoin="round"/></svg>
<div class="t" style="left:97.5px;top:353.6px;font-size:32.8px;line-height:32.8px;font-weight:400;color:#25282d;letter-spacing:0.185px;">Explore</div>
<svg class="b" style="left:30px;top:350px;" width="44" height="44" viewBox="30 350 44 44" fill="none" ><path d="M37.5 367.8 L61.6 354.3 L67.6 365 L41.2 374.8 Q36.5 376 35.5 372 Q35 369 37.5 367.8 Z" stroke="#25282d" stroke-width="3" stroke-linejoin="round"/><path d="M56 357.2 L60.2 367.2" stroke="#25282d" stroke-width="3"/><path d="M52.2 373.6 V385.5 M52.2 376 L41.4 385.5 M52.2 376 L62.6 385.5" stroke="#25282d" stroke-width="3" stroke-linecap="round"/></svg>
<svg class="b" style="left:362px;top:358px;" width="28" height="22" viewBox="362 358 28 22" fill="none" ><path d="M368 365 L376 373.5 L384 365" stroke="#25282d" stroke-width="2.4" stroke-linecap="round" stroke-linejoin="round"/></svg>
<div class="t" style="left:87.0px;top:453.1px;font-size:29.4px;line-height:29.4px;font-weight:400;color:#474d56;letter-spacing:0.175px;">Source Tables</div>
<div class="t" style="left:87.0px;top:537.1px;font-size:29.4px;line-height:29.4px;font-weight:400;color:#474d56;letter-spacing:0.231px;">Managed Views</div>
<div class="b" style="left:0px;top:594px;width:432px;height:83px;background:#e8f2fd;"></div>
<div class="b" style="left:420px;top:594px;width:12px;height:83px;background:#2d63d9;"></div>
<div class="t" style="left:87.0px;top:621.1px;font-size:29.4px;line-height:29.4px;font-weight:400;color:#111a30;letter-spacing:0.172px;">Tables</div>
<div class="t" style="left:87.0px;top:705.1px;font-size:29.4px;line-height:29.4px;font-weight:400;color:#474d56;letter-spacing:1.076px;">Entities</div>
<div class="t" style="left:97.5px;top:801.1px;font-size:32.8px;line-height:32.8px;font-weight:400;color:#25282d;letter-spacing:0.284px;">Formulate</div>
<svg class="b" style="left:366px;top:804px;" width="20" height="28" viewBox="366 804 20 28" fill="none" ><path d="M372 809.3 L380.5 818 L372 826.7" stroke="#25282d" stroke-width="2.4" stroke-linecap="round" stroke-linejoin="round"/></svg>
<svg class="b" style="left:28px;top:794px;" width="48" height="48" viewBox="28 794 48 48" fill="none" ><path d="M55.79 806.41 L55.79 810.59 L52.69 810.96 L52.33 811.84 L54.25 814.30 L51.30 817.25 L48.84 815.33 L47.96 815.69 L47.59 818.79 L43.41 818.79 L43.04 815.69 L42.16 815.33 L39.70 817.25 L36.75 814.30 L38.67 811.84 L38.31 810.96 L35.21 810.59 L35.21 806.41 L38.31 806.04 L38.67 805.16 L36.75 802.70 L39.70 799.75 L42.16 801.67 L43.04 801.31 L43.41 798.21 L47.59 798.21 L47.96 801.31 L48.84 801.67 L51.30 799.75 L54.25 802.70 L52.33 805.16 L52.69 806.04 Z" stroke="#25282d" stroke-width="1.9" stroke-linejoin="round"/><circle cx="45.5" cy="808.5" r="4.6" stroke="#25282d" stroke-width="1.9"/><path d="M48 799 Q62 797 66.5 808 Q68 813 67 817 L70 824 L67 825 V832 Q67 834 65 834 H59 V837 H44.5 V826.5 Q39 820 37 814" stroke="#25282d" stroke-width="2" stroke-linejoin="round" stroke-linecap="round"/></svg>
<div class="t" style="left:97.5px;top:912.9px;font-size:32.8px;line-height:32.8px;font-weight:400;color:#25282d;letter-spacing:0.302px;">Ideate</div>
<svg class="b" style="left:366px;top:916px;" width="20" height="28" viewBox="366 916 20 28" fill="none" ><path d="M372 921.3 L380.5 930 L372 938.7" stroke="#25282d" stroke-width="2.4" stroke-linecap="round" stroke-linejoin="round"/></svg>
<svg class="b" style="left:30px;top:908px;" width="44" height="44" viewBox="30 908 44 44" fill="none" ><circle cx="51.8" cy="929.5" r="8.6" stroke="#25282d" stroke-width="2.8"/><path d="M47.5 937.5 V942 Q47.5 946.5 51.8 946.5 Q56 946.5 56 942 V937.5" stroke="#25282d" stroke-width="2.8"/><circle cx="51.8" cy="915.6" r="1.7" fill="#25282d"/><circle cx="41.6" cy="919.7" r="1.7" fill="#25282d"/><circle cx="62" cy="919.7" r="1.7" fill="#25282d"/><circle cx="36.6" cy="929.6" r="1.7" fill="#25282d"/><circle cx="67" cy="929.6" r="1.7" fill="#25282d"/></svg>
<div class="t" style="left:97.5px;top:1025.2px;font-size:32.8px;line-height:32.8px;font-weight:400;color:#25282d;letter-spacing:0.543px;">Experiment</div>
<svg class="b" style="left:366px;top:1028px;" width="20" height="28" viewBox="366 1028 20 28" fill="none" ><path d="M372 1033.3 L380.5 1042 L372 1050.7" stroke="#25282d" stroke-width="2.4" stroke-linecap="round" stroke-linejoin="round"/></svg>
<svg class="b" style="left:34px;top:1020px;" width="36" height="42" viewBox="34 1020 36 42" fill="none" ><path d="M45.5 1027 H58.8 M48.6 1027.5 V1037.2 L41.6 1055.2 Q41 1057.5 43.4 1057.5 H61 Q63.4 1057.5 62.8 1055.2 L55.6 1037.2 V1027.5 M48.6 1037.3 H55.6" stroke="#25282d" stroke-width="3" stroke-linejoin="round" stroke-linecap="round"/></svg>
<div class="t" style="left:97.5px;top:1137.2px;font-size:32.8px;line-height:32.8px;font-weight:400;color:#25282d;letter-spacing:-0.308px;">Approve</div>
<svg class="b" style="left:366px;top:1140px;" width="20" height="28" viewBox="366 1140 20 28" fill="none" ><path d="M372 1145.3 L380.5 1154 L372 1162.7" stroke="#25282d" stroke-width="2.4" stroke-linecap="round" stroke-linejoin="round"/></svg>
<svg class="b" style="left:34px;top:1140px;" width="38" height="30" viewBox="34 1140 38 30" fill="none" ><path d="M39.5 1154 L47.5 1162.5 L65.8 1146" stroke="#25282d" stroke-width="3.2" stroke-linecap="round" stroke-linejoin="round"/></svg>
<div class="t" style="left:97.5px;top:1249.2px;font-size:32.8px;line-height:32.8px;font-weight:400;color:#25282d;letter-spacing:-0.422px;">Manage</div>
<svg class="b" style="left:366px;top:1252px;" width="20" height="28" viewBox="366 1252 20 28" fill="none" ><path d="M372 1257.3 L380.5 1266 L372 1274.7" stroke="#25282d" stroke-width="2.4" stroke-linecap="round" stroke-linejoin="round"/></svg>
<svg class="b" style="left:32px;top:1246px;" width="40" height="40" viewBox="32 1246 40 40" fill="none" ><path d="M36.5 1267 H43.5 L48.5 1279.5 L54.5 1253 L58.5 1267 H67" stroke="#25282d" stroke-width="3" stroke-linecap="round" stroke-linejoin="round"/></svg>
<div class="b" style="left:0px;top:1930px;width:432px;height:2px;background:#d2d7dd;"></div>
<div class="t" style="left:97.5px;top:1970.9px;font-size:32.8px;line-height:32.8px;font-weight:400;color:#25282d;letter-spacing:0.877px;">Security</div>
<svg class="b" style="left:366px;top:1974.5px;" width="20" height="28" viewBox="366 1974.5 20 28" fill="none" ><path d="M372 1979.8 L380.5 1988.5 L372 1997.2" stroke="#25282d" stroke-width="2.4" stroke-linecap="round" stroke-linejoin="round"/></svg>
<svg class="b" style="left:30px;top:1966px;" width="44" height="44" viewBox="30 1966 44 44" fill="none" ><path d="M52 1973.5 Q45 1978.5 37 1977 Q35 1993 52 2003.5" stroke="#25282d" stroke-width="3" stroke-linecap="round" stroke-linejoin="round"/><path d="M52 1973.5 Q59 1978.5 67 1977 Q68 1985 66 1990" stroke="#25282d" stroke-width="3" stroke-linecap="round" stroke-linejoin="round"/><path d="M56.5 1998.5 L60 2002.5 L67.5 1995.5" stroke="#25282d" stroke-width="3" stroke-linecap="round" stroke-linejoin="round"/></svg>
<div class="t" style="left:97.5px;top:2083.2px;font-size:32.8px;line-height:32.8px;font-weight:400;color:#25282d;letter-spacing:0.406px;">Admin</div>
<svg class="b" style="left:366px;top:2086.5px;" width="20" height="28" viewBox="366 2086.5 20 28" fill="none" ><path d="M372 2091.8 L380.5 2100.5 L372 2109.2" stroke="#25282d" stroke-width="2.4" stroke-linecap="round" stroke-linejoin="round"/></svg>
<svg class="b" style="left:34px;top:2078px;" width="42" height="44" viewBox="34 2078 42 44" fill="none" ><circle cx="52" cy="2091.5" r="6.3" stroke="#25282d" stroke-width="3"/><path d="M41.8 2115.5 V2112 Q41.8 2105 49 2104.5" stroke="#25282d" stroke-width="3" stroke-linecap="round"/><circle cx="62.5" cy="2110.5" r="4.5" stroke="#25282d" stroke-width="2.8"/><path d="M65.8 2113.8 L69.5 2117.3" stroke="#25282d" stroke-width="2.8" stroke-linecap="round"/></svg>
<div class="b" style="left:3328px;top:2015.5px;width:99.5px;height:99.5px;background:#3a77f1;border-radius:50%;box-shadow:0 2px 5px rgba(0,0,0,0.22);"></div>
<div class="t" style="left:3361.5px;top:2040.2px;font-size:57px;line-height:57px;font-weight:700;color:#fff;letter-spacing:-4.828px;">?</div>
<script>(function(){var s=window.innerWidth/3444;if(s>0&&Math.abs(s-1)>0.01){var b=document.body;b.style.transformOrigin="0 0";b.style.transform="scale("+s+")";}})();</script>
</body></html>
